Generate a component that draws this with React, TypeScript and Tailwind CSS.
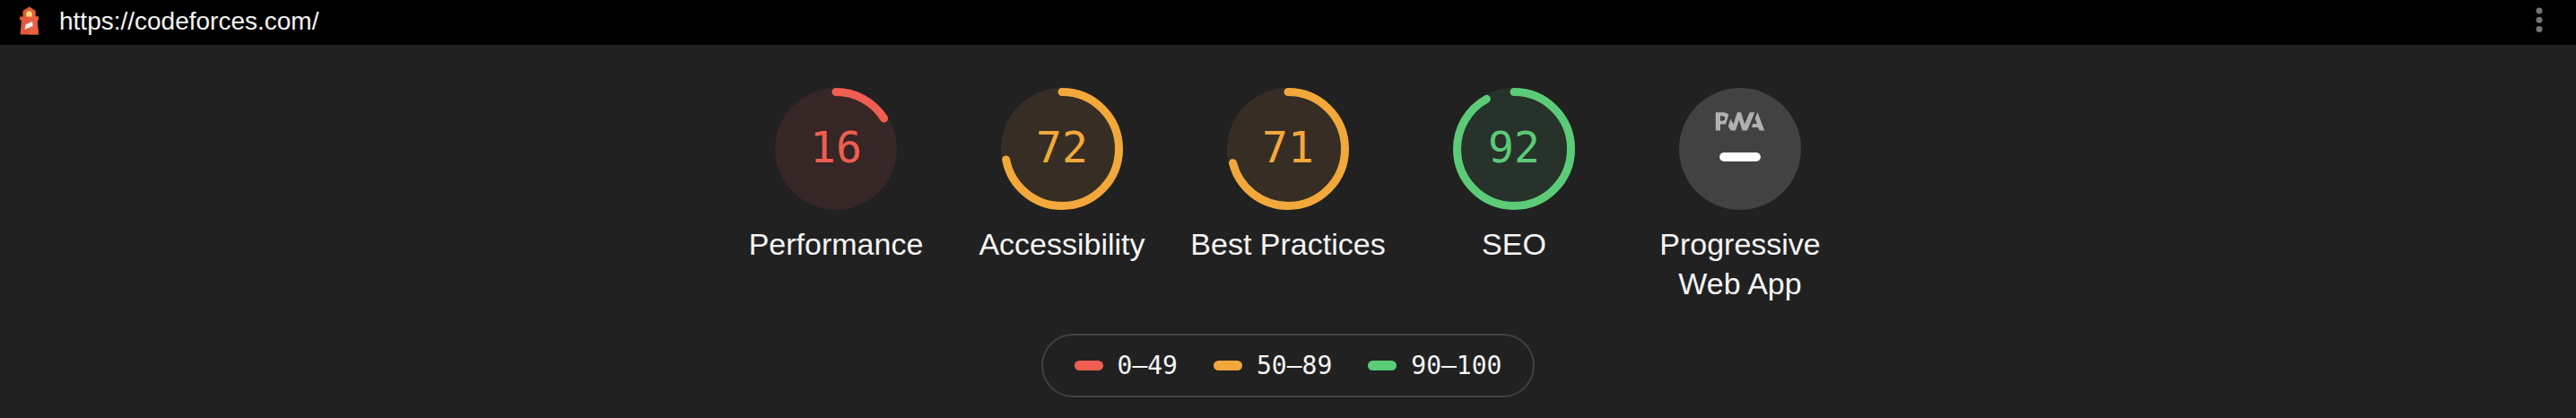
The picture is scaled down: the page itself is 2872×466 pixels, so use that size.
type Tone = { stroke: string; disc: string; text: string; swatch: string };

const red: Tone = { stroke: "stroke-[#ef5e50]", disc: "fill-[#362626]", text: "text-[#ef5e50]", swatch: "bg-[#ef5e50]" };
const orange: Tone = { stroke: "stroke-[#f3a83b]", disc: "fill-[#362e24]", text: "text-[#f3a83b]", swatch: "bg-[#f3a83b]" };
const green: Tone = { stroke: "stroke-[#5ccb77]", disc: "fill-[#27322a]", text: "text-[#5ccb77]", swatch: "bg-[#5ccb77]" };

const scores = [
  { label: "Performance", score: 16, tone: red },
  { label: "Accessibility", score: 72, tone: orange },
  { label: "Best Practices", score: 71, tone: orange },
  { label: "SEO", score: 92, tone: green },
];

const ranges = [
  { text: "0–49", tone: red },
  { text: "50–89", tone: orange },
  { text: "90–100", tone: green },
];

const gaugeLink = "flex w-63 flex-col items-center gap-4 text-center text-[34px] leading-[44px]";

function LighthouseLogo() {
  return (
    <svg className="h-8 w-6" viewBox="0 0 24 32" aria-hidden="true">
      <path d="M5.5 5L12.5 .5l7 4.5v6.5H23v4h-1.5l1.5 16H2.5l1.5-16H2v-4h3.5z" fill="#e4593a" />
      <path d="M12.5 .5l7 4.5v6.5H23v4h-1.5l1.5 16H12.500z" fill="#e86040" />
      <path d="M9.300 11.500V7.500L11 5.500h3l1.500 2v4z" fill="#f3df80" />
      <path d="M8.500 20.500L16 17l.700 5L7.500 26z" fill="#eeeeee" />
    </svg>
  );
}

function ScoreGauge({ label, score, tone }: { label: string; score: number; tone: Tone }) {
  return (
    <a href={"#" + label.toLowerCase().replace(" ", "-")} className={gaugeLink}>
      <span className="grid size-34 place-items-center">
        <svg className="col-start-1 row-start-1 size-34 -rotate-90" viewBox="0 0 136 136" aria-hidden="true">
          <circle cx="68" cy="68" r="68" className={tone.disc} />
          <circle
            cx="68"
            cy="68"
            r="63.5"
            fill="none"
            strokeWidth="9"
            strokeLinecap="round"
            pathLength="100"
            strokeDasharray={`${score} 100`}
            className={tone.stroke}
          />
        </svg>
        <span
          className={"z-10 col-start-1 row-start-1 pb-1 font-['DejaVu_Sans_Mono','Liberation_Mono',monospace] text-[48px] leading-[56px] " + tone.text}
        >
          {score}
        </span>
      </span>
      <span>{label}</span>
    </a>
  );
}

function PwaGauge() {
  return (
    <a href="#pwa" className={gaugeLink}>
      <svg className="size-34" viewBox="0 0 60 60" aria-hidden="true">
        <circle cx="30" cy="30" r="30" fill="#424242" />
        <g fill="#b0b0b0">
          <path d="M35.66 19.39l.7-1.75h2L37.4 15 38.6 12l3.4 9h-2.51l-.58-1.61z" />
          <path d="M33.52 21l3.65-9h-2.42l-2.5 5.82L30.5 12h-1.86l-1.9 5.82-1.35-2.65-1.21 3.72L25.4 21h2.38l1.72-5.2 1.64 5.2z" />
          <path d="M20.3 17.91h1.48c.45 0 .85-.05 1.2-.15l.39-1.18 1.07-3.3a2.64 2.64 0 0 0-.28-.37c-.55-.6-1.36-.91-2.42-.91H18v9h2.3V17.9zm1.96-3.84c.22.22.33.5.33.87 0 .36-.1.65-.29.87-.2.23-.59.35-1.15.35h-.86v-2.41h.87c.52 0 .89.1 1.1.32z" />
        </g>
        <rect x="19.9" y="31.8" width="20.2" height="4.4" rx="2.2" fill="#ffffff" />
      </svg>
      <span className="w-56">Progressive Web App</span>
    </a>
  );
}

export default function App() {
  return (
    <div className="min-h-screen bg-[#212121] font-['Liberation_Sans',Arial,sans-serif] text-[#f5f5f5]">
      <header className="flex h-[50px] items-center bg-black pr-6 pl-5">
        <div className="flex h-full grow items-center gap-[22px] pb-1">
          <LighthouseLogo />
          <a href="https://codeforces.com/" className="pt-0.5 text-[28px] leading-8">
            https://codeforces.com/
          </a>
        </div>
        <button type="button" aria-label="Tools menu" className="flex w-[34px] justify-center pb-1">
          <svg className="h-8 w-2" viewBox="0 0 8 32" fill="#757575" aria-hidden="true">
            <circle cx="4" cy="5" r="3.5" />
            <circle cx="4" cy="15.2" r="3.5" />
            <circle cx="4" cy="25.4" r="3.5" />
          </svg>
        </button>
      </header>
      <main className="flex flex-col items-center gap-[34px] pt-12 pb-5">
        <nav aria-label="Category scores" className="flex flex-wrap justify-center">
          {scores.map((item) => (
            <ScoreGauge key={item.label} {...item} />
          ))}
          <PwaGauge />
        </nav>
        <ul className="flex items-center gap-10 rounded-full border-2 border-[#424242] px-[35px] py-4 font-['DejaVu_Sans_Mono','Liberation_Mono',monospace] text-[28px] leading-[35px]">
          {ranges.map(({ text, tone }) => (
            <li key={text} className="flex items-center gap-4">
              <span className={"h-[11px] w-8 rounded-full " + tone.swatch} />
              {text}
            </li>
          ))}
        </ul>
      </main>
    </div>
  );
}
